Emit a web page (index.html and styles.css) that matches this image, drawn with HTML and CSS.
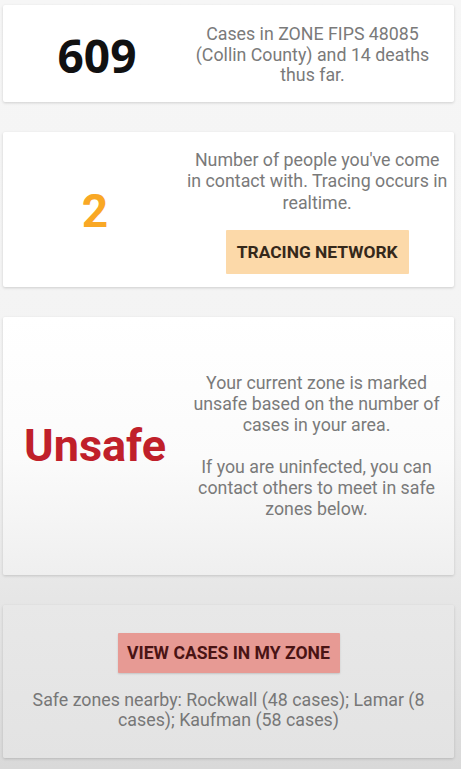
FILE: index.html
```html
<!DOCTYPE html>
<html lang="en">
<head>
<meta charset="utf-8">
<title>Zone status</title>
<link rel="stylesheet" href="styles.css">
</head>
<body>
<main class="stack">
  <section class="card card-cases">
    <div class="big big-black">609</div>
    <p class="desc">Cases in ZONE FIPS 48085<br>(Collin County) and 14 deaths<br>thus far.</p>
  </section>

  <section class="card card-contacts">
    <div class="big big-orange">2</div>
    <div class="side">
      <p class="desc desc-tall">Number of people you've come<br>in contact with. Tracing occurs in<br>realtime.</p>
      <button class="btn btn-orange">TRACING NETWORK</button>
    </div>
  </section>

  <section class="card card-status">
    <div class="big big-red">Unsafe</div>
    <div class="side">
      <p class="desc desc-21">Your current zone is marked<br>unsafe based on the number of<br>cases in your area.</p>
      <p class="desc desc-21 gap">If you are uninfected, you can<br>contact others to meet in safe<br>zones below.</p>
    </div>
  </section>

  <section class="card card-zone">
    <button class="btn btn-red">VIEW CASES IN MY ZONE</button>
    <p class="desc desc-20 nearby">Safe zones nearby: Rockwall (48 cases); Lamar (8<br>cases); Kaufman (58 cases)</p>
  </section>
</main>
</body>
</html>
```

FILE: styles.css
```css
html, body {
  margin: 0;
  height: 100%;
}
body {
  background: linear-gradient(to bottom, #f6f6f6 0%, #f3f3f3 55%, #e2e2e2 85%, #d9d9d9 100%);
  font-family: Roboto, "Liberation Sans", sans-serif;
  padding: 5px 7px 0 3px;
  box-sizing: border-box;
  overflow: hidden;
}
.stack {
  display: flex;
  flex-direction: column;
  gap: 30px;
}
.card {
  background: #ffffff;
  box-shadow: 0 1px 3px rgba(0, 0, 0, 0.16);
  border-radius: 2px;
  display: grid;
  grid-template-columns: 184px 1fr;
  align-items: center;
}
.big {
  text-align: center;
  font-weight: 700;
  line-height: 1;
}
.big-black {
  color: #111111;
  font-family: "Open Sans", Roboto, sans-serif;
  font-size: 46px;
  padding-left: 4px;
}
.big-orange {
  color: #f9a825;
  font-size: 46px;
  padding-left: 0;
}
.big-red {
  color: #c0202a;
  font-size: 45px;
  padding-left: 0;
}
.desc {
  margin: 0;
  color: #7a7a7a;
  font-size: 17.8px;
  line-height: 20.5px;
  text-align: center;
  white-space: nowrap;
}
.card-cases {
  padding: 19px 8px 16px 0;
}
.card-cases .desc {
  padding-right: 8px;
}
.side {
  display: flex;
  flex-direction: column;
  align-items: center;
  padding-right: 8px;
}
.card-contacts {
  padding: 17px 0 13px 0;
}
.desc-tall {
  line-height: 21.5px;
}
.btn {
  border: none;
  font-family: Roboto, "Liberation Sans", sans-serif;
  font-weight: 700;
  font-size: 17.4px;
  letter-spacing: 0;
  border-radius: 1px;
  cursor: pointer;
}
.btn-orange {
  margin-top: 17px;
  background: #fcd9a9;
  color: #35281a;
  height: 44px;
  width: 183px;
  padding: 0;
}
.card-status {
  padding: 55px 0 56px 0;
  background: linear-gradient(to bottom, #ffffff 0%, #fbfbfb 55%, #efefef 100%);
}
.desc-21 {
  line-height: 21px;
}
.gap {
  margin-top: 21px;
}
.card-zone {
  display: flex;
  flex-direction: column;
  align-items: center;
  padding: 28px 0 28px 0;
  background: linear-gradient(to bottom, #e8e8e8 0%, #e3e3e3 100%);
}
.btn-red {
  background: #e79a94;
  color: #4a1414;
  height: 40px;
  width: 222px;
  padding: 0;
  font-size: 17.6px;
  box-shadow: 0 1px 2px rgba(0, 0, 0, 0.15);
}
.desc-20 {
  line-height: 20px;
}
.nearby {
  margin-top: 17px;
  color: #777777;
}
```
